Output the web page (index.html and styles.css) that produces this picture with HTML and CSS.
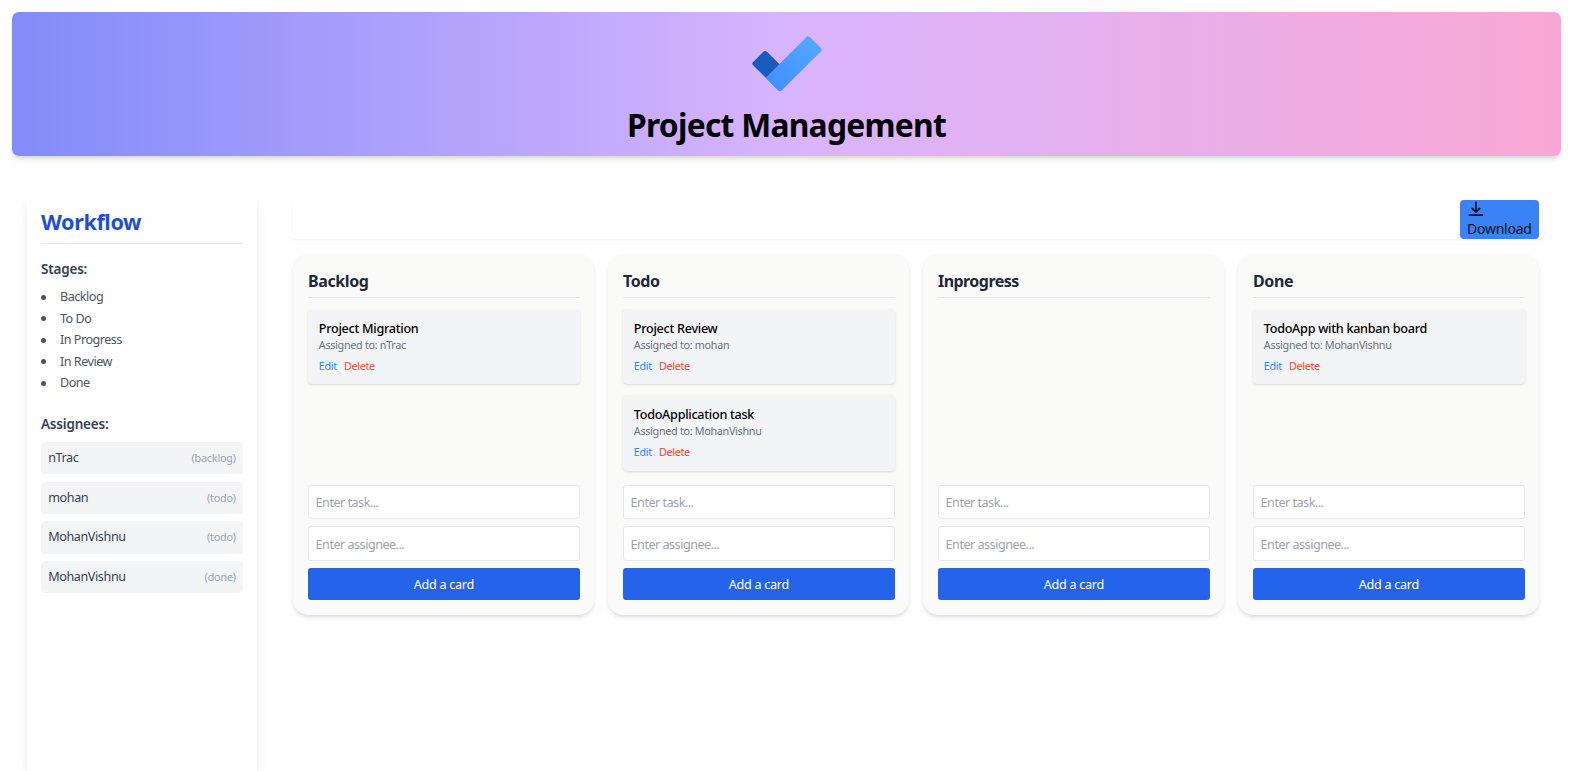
FILE: index.html
```html
<!DOCTYPE html>
<html lang="en">
<head>
<meta charset="utf-8">
<title>Project Management</title>
<link rel="stylesheet" href="styles.css">
</head>
<body>
<header class="banner">
  <svg class="logo" width="70" height="56" viewBox="0 0 70 56">
    <defs><linearGradient id="tick" x1="0" y1="1" x2="1" y2="0"><stop offset="0" stop-color="#3f8cff"/><stop offset="1" stop-color="#55abff"/></linearGradient></defs>
    <path d="M.9 26.2 11.4 15.7Q13.2 14.1 15 15.7L28 28.8 14.6 42.6.9 29Q-.5 27.6.9 26.2Z" fill="#185abd"/>
    <path d="M14.9 40.6 54.6.9Q56.2-.5 57.8.9L69 12.1Q70.3 13.7 69 15.3L29.6 54.6Q27.9 56 26.2 54.6L14.9 43.3Q13.7 42 14.9 40.6Z" fill="url(#tick)"/>
  </svg>
  <h1 class="title"><span>Project Management</span></h1>
</header>
<div class="layout">
  <aside class="sidebar">
    <h2 class="side-title"><span>Workflow</span></h2>
    <h3 class="side-heading"><span>Stages:</span></h3>
    <ul class="stages">
      <li><span>Backlog</span></li><li><span>To Do</span></li><li><span>In Progress</span></li><li><span>In Review</span></li><li><span>Done</span></li>
    </ul>
    <h3 class="side-heading"><span>Assignees:</span></h3>
    <ul class="people">
      <li><span>nTrac</span><small>(backlog)</small></li>
      <li><span>mohan</span><small>(todo)</small></li>
      <li><span>MohanVishnu</span><small>(todo)</small></li>
      <li><span>MohanVishnu</span><small>(done)</small></li>
    </ul>
  </aside>
  <main class="main">
    <div class="toolbar">
      <button class="download">
        <svg width="18" height="18" viewBox="0 0 18 18" fill="none" stroke="#0b1220" stroke-width="1.7"><path d="M8.9 1.6V12M4.6 7.8 8.9 12l4.3-4.2M1.7 15.1H16.2"/></svg>
        <span>Download</span>
      </button>
    </div>
    <div class="board">
      <section class="column">
        <h2 class="column-title"><span>Backlog</span></h2>
        <div class="cards">
          <article class="card"><h3><span>Project Migration</span></h3><p><span>Assigned to: nTrac</span></p><div class="actions"><a class="edit">Edit</a><a class="delete">Delete</a></div></article>
        </div>
        <form class="add"><input placeholder="Enter task..."><input placeholder="Enter assignee..."><button type="button">Add a card</button></form>
      </section>
      <section class="column">
        <h2 class="column-title"><span>Todo</span></h2>
        <div class="cards">
          <article class="card"><h3><span>Project Review</span></h3><p><span>Assigned to: mohan</span></p><div class="actions"><a class="edit">Edit</a><a class="delete">Delete</a></div></article>
          <article class="card"><h3><span>TodoApplication task</span></h3><p><span>Assigned to: MohanVishnu</span></p><div class="actions"><a class="edit">Edit</a><a class="delete">Delete</a></div></article>
        </div>
        <form class="add"><input placeholder="Enter task..."><input placeholder="Enter assignee..."><button type="button">Add a card</button></form>
      </section>
      <section class="column">
        <h2 class="column-title wide"><span>Inprogress</span></h2>
        <div class="cards"></div>
        <form class="add"><input placeholder="Enter task..."><input placeholder="Enter assignee..."><button type="button">Add a card</button></form>
      </section>
      <section class="column">
        <h2 class="column-title"><span>Done</span></h2>
        <div class="cards">
          <article class="card"><h3><span>TodoApp with kanban board</span></h3><p><span>Assigned to: MohanVishnu</span></p><div class="actions"><a class="edit">Edit</a><a class="delete">Delete</a></div></article>
        </div>
        <form class="add"><input placeholder="Enter task..."><input placeholder="Enter assignee..."><button type="button">Add a card</button></form>
      </section>
    </div>
  </main>
</div>
</body>
</html>
```
FILE: styles.css
```css
* { box-sizing: border-box; margin: 0; padding: 0; }
body {
  height: 771px;
  overflow: hidden;
  padding: 12px 16px 0 12px;
  background: #fefefe;
  font-family: "Noto Sans", "Open Sans", sans-serif;
  font-size: 12.6px;
  line-height: 18px;
  color: #000;
}
ul { list-style: none; }
button, input { font: inherit; border: 0; }

.banner {
  height: 144px;
  padding-top: 23.5px;
  display: flex;
  flex-direction: column;
  align-items: center;
  border-radius: 7px;
  background: linear-gradient(to right, #818cf8, #d8b4fe, #f9a8d4);
  box-shadow: 0 4px 5px -1px rgba(0, 0, 0, .12), 0 2px 4px -2px rgba(0, 0, 0, .1);
}
.logo { flex: none; display: block; overflow: visible; }
.title { margin-top: 13.5px; font-size: 31.8px; line-height: 40px; font-weight: 700; letter-spacing: -.75px; }

.layout { display: flex; align-items: flex-start; padding: 35px 22px 0 15px; }
.sidebar {
  flex: none;
  width: 230px;
  height: 580px;
  padding: 14px;
  background: #fefefe;
  border-radius: 11px 11px 0 0;
  box-shadow: 0 9px 14px -3px rgba(0, 0, 0, .1), 0 4px 6px -4px rgba(0, 0, 0, .1);
}
.side-title {
  height: 39px;
  padding-top: 3px;
  border-bottom: 1px solid #e5e7eb;
  color: #1d4ed8;
  font-size: 21.6px;
  line-height: 28.8px;
  letter-spacing: -.4px;
}
.side-heading { margin-top: 14px; color: #374151; font-size: 13.5px; line-height: 22px; font-weight: 600; letter-spacing: -.2px; }
.stages { display: grid; gap: 3.6px; margin: 8px 0 20.6px; color: #4b5563; letter-spacing: -.5px; }
.stages li { display: flex; align-items: center; gap: 14px; }
.stages li::before { content: ""; width: 5px; height: 5px; border-radius: 50%; background: #4b5563; }
.people { display: grid; gap: 7.2px; margin-top: 7px; color: #374151; letter-spacing: -.4px; }
.people li { display: flex; justify-content: space-between; align-items: center; height: 32.4px; padding: 0 7.2px; border-radius: 5px; background: #f3f4f6; }
.people small { font-size: 10.8px; color: #9ca3af; letter-spacing: -.2px; }

.main { flex: 1; margin: 9px 0 0 36px; }
.toolbar { display: flex; justify-content: flex-end; height: 39px; background: #fefefe; box-shadow: 0 1px 2px rgba(0, 0, 0, .05); }
.download { width: 79px; height: 39px; padding: 0 7px; border-radius: 4px; background: #3b82f6; color: #0b1220; text-align: left; font-size: 14px; }
.download svg { display: block; }
.download span { display: block; line-height: 22px; letter-spacing: -.25px; }

.board { display: grid; grid-template-columns: repeat(4, 1fr); gap: 14px; margin-top: 15px; }
.column {
  display: flex;
  flex-direction: column;
  height: 361px;
  padding: 15px 14.4px 15px 15px;
  border-radius: 15px;
  background: #fafaf9;
  box-shadow: 0 3px 5px -1px rgba(0, 0, 0, .1), 0 2px 4px -2px rgba(0, 0, 0, .1);
}
.column-title { height: 29px; border-bottom: 1px solid #e5e7eb; color: #1f2937; font-size: 16px; line-height: 25px; letter-spacing: -.4px; }
.column-title.wide { letter-spacing: -.55px; }
.cards { flex: 1; display: grid; align-content: start; gap: 10.8px; margin-top: 11px; }
.card { height: 75.4px; padding: 10.8px; border-radius: 4px; background: #f3f4f6; box-shadow: 0 1px 3px rgba(0, 0, 0, .1), 0 1px 2px -1px rgba(0, 0, 0, .1); }
.card h3 { font-size: 12.6px; line-height: 18px; font-weight: 500; letter-spacing: -.27px; }
.card p { font-size: 10.8px; line-height: 13.4px; color: #6b7280; letter-spacing: -.31px; }
.actions { display: flex; gap: 7.2px; margin-top: 7.8px; font-size: 10.8px; line-height: 14.4px; letter-spacing: -.33px; }
.edit { color: #3b82f6; }
.delete { color: #ef4444; }
.add { display: grid; gap: 7.2px; }
.add input { width: 100%; height: 34.2px; padding: 1px 6.6px 0; border: 1px solid #e5e7eb; border-radius: 3px; background: #fff; letter-spacing: -.5px; }
.add input + input { height: 34.8px; padding-top: 2px; }
.add input::placeholder { color: #9ca3af; opacity: 1; }
.add button { height: 32px; padding-top: 2px; border-radius: 3px; background: #2563eb; color: #fff; letter-spacing: -.28px; }
```
